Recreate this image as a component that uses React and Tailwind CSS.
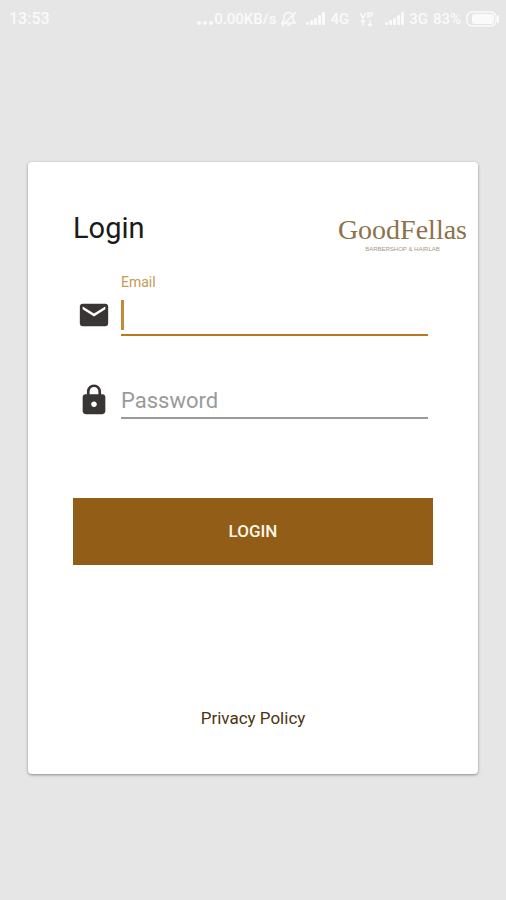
import React, { useState } from 'react';
import { MdEmail, MdLock } from 'react-icons/md';

const SignalBars = () => (
  <svg viewBox="0 0 20 14" className="w-5 h-[14px]" fill="currentColor" aria-hidden="true">
    <rect x="0" y="10" width="3" height="3" rx="1" />
    <rect x="4" y="8" width="3" height="5" rx="1" />
    <rect x="8" y="6" width="3" height="7" rx="1" />
    <rect x="12" y="3" width="3" height="10" rx="1" />
    <rect x="16" y="0" width="3" height="13" rx="1" />
  </svg>
);

const MutedIcon = () => (
  <svg viewBox="0 0 18 18" className="w-[18px] h-[18px]" fill="none" stroke="currentColor" strokeWidth="1.5" aria-hidden="true">
    <path d="M2 13h13l-2-3V7a4 4 0 0 0-9 0v3z" />
    <path d="M2 16 16 2" />
    <path d="M7 15h4" />
  </svg>
);

const DataIcon = () => (
  <svg viewBox="0 0 16 16" className="w-4 h-4" fill="none" stroke="currentColor" strokeWidth="1.5" aria-hidden="true">
    <path d="M1 2l3 5 3-5M9 7V2h3a1.5 1.5 0 0 1 0 3H9" />
    <path d="M4 15V9M2 11l2-2 2 2M11 9v6M9 13l2 2 2-2" />
  </svg>
);

const BatteryIcon = () => (
  <svg viewBox="0 0 34 16" className="w-[34px] h-4" aria-hidden="true">
    <rect x="1" y="1" width="29" height="14" rx="5" fill="none" stroke="currentColor" strokeWidth="1.5" />
    <rect x="6" y="3" width="22" height="10" rx="2" fill="currentColor" />
    <path d="M32 5v6" stroke="currentColor" strokeWidth="2" strokeLinecap="round" />
  </svg>
);

const StatusBar = () => (
  <header className="flex items-center justify-between h-[38px] pl-[9px] pr-[6px] text-base font-medium text-[#fafafa]">
    <span>13:53</span>
    <div className="flex items-center text-[15px]">
      <svg viewBox="0 0 18 14" className="w-[18px] h-[14px]" fill="currentColor" aria-hidden="true">
        <circle cx="3" cy="11" r="2" />
        <circle cx="9" cy="11" r="2" />
        <circle cx="15" cy="11" r="2" />
      </svg>
      <span className="mr-1">0.00KB/s</span>
      <MutedIcon />
      <div className="flex items-center gap-1 ml-2">
        <SignalBars />
        <span>4G</span>
      </div>
      <div className="flex items-center mx-[10px]">
        <DataIcon />
      </div>
      <div className="flex items-center gap-1">
        <SignalBars />
        <span>3G</span>
      </div>
      <span className="mx-[5px]">83%</span>
      <BatteryIcon />
    </div>
  </header>
);

const Logo = () => (
  <div className="flex flex-col items-center text-[#8f7149]">
    <span className="font-['Liberation_Serif',serif] text-[28px] leading-6">GoodFellas</span>
    <span className="mt-1 font-['Liberation_Sans',sans-serif] text-[6px] leading-[6px] text-[#a8977f]">
      BARBERSHOP &amp; HAIRLAB
    </span>
  </div>
);

const App = () => {
  const [form, setForm] = useState({ email: '', password: '' });
  const [emailActive, setEmailActive] = useState(true);

  const handleChange = (e) => {
    setForm({ ...form, [e.target.name]: e.target.value });
  };

  return (
    <div className="min-h-screen bg-[#e6e6e6] font-[Roboto,sans-serif]">
      <StatusBar />

      <main className="mx-7 mt-[124px] pt-12 pb-[43px] bg-white rounded-sm shadow-[0_1px_3px_rgba(0,0,0,0.4)]">
        <div className="flex items-start justify-between pl-[45px] pr-[11px]">
          <h1 className="text-[29px] leading-9 text-[#1a1a1a]">Login</h1>
          <div className="pt-2">
            <Logo />
          </div>
        </div>

        <form onSubmit={(e) => e.preventDefault()} className="px-[45px] mt-[22px]">
          <div className="flex items-end pl-1 pr-[5px]">
            <MdEmail className="w-[34px] h-[34px] mb-1 text-[#3a3535]" />
            <div className="flex-1 ml-[10px]">
              <label htmlFor="email" className="block text-sm leading-4 text-[#c49a55]">
                Email
              </label>
              <div className="relative mt-[10px]">
                <input
                  id="email"
                  name="email"
                  type="email"
                  value={form.email}
                  onChange={handleChange}
                  onFocus={() => setEmailActive(true)}
                  onBlur={() => setEmailActive(false)}
                  className="block w-full h-9 border-b-2 border-[#b97a1f] text-[22px] caret-transparent outline-none"
                />
                {emailActive && !form.email && (
                  <span className="absolute left-0 top-0 w-[3px] h-[30px] bg-[#c08a3c]" />
                )}
              </div>
            </div>
          </div>

          <div className="flex items-end mt-[47px] pl-1 pr-[5px]">
            <MdLock className="w-[34px] h-[34px] mb-[2px] text-[#3a3535]" />
            <input
              name="password"
              type="password"
              aria-label="Password"
              placeholder="Password"
              value={form.password}
              onChange={handleChange}
              className="flex-1 min-w-0 h-9 ml-[10px] border-b-2 border-[#9a9a9a] text-[22px] placeholder:text-[#9a9a9a] outline-none"
            />
          </div>

          <button type="submit" className="block w-full h-[67px] mt-[79px] bg-[#925d16] text-[17px] font-medium text-[#fdf6e6]">
            LOGIN
          </button>
        </form>

        <div className="mt-[141px] text-center">
          <a href="#privacy" className="inline-block text-[17px] leading-6 text-[#4a3510]">
            Privacy Policy
          </a>
        </div>
      </main>
    </div>
  );
};

export default App;
